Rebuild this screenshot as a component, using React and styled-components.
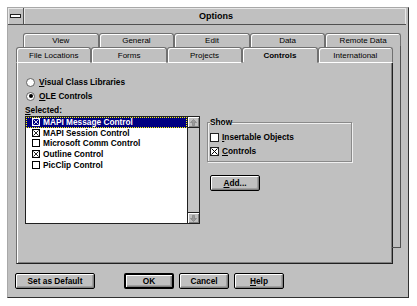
import React, { useState } from "react";
import styled, { createGlobalStyle } from "styled-components";

const GlobalStyle = createGlobalStyle`
  html, body {
    margin: 0;
    padding: 0;
    background: #fff;
  }
  body {
    font-family: "Liberation Sans", Arial, sans-serif;
    color: #000;
  }
  * { box-sizing: border-box; }
`;

const backTabs = ["View", "General", "Edit", "Data", "Remote Data"];
const frontTabs = ["File Locations", "Forms", "Projects", "Controls", "International"];

const initialControls = [
  { name: "MAPI Message Control", on: true },
  { name: "MAPI Session Control", on: true },
  { name: "Microsoft Comm Control", on: false },
  { name: "Outline Control", on: true },
  { name: "PicClip Control", on: false }
];

function Cross() {
  return (
    <svg width="7" height="7" viewBox="0 0 7 7">
      <path d="M0.5 0.5L6.5 6.5M6.5 0.5L0.5 6.5" stroke="currentColor" strokeWidth="1" />
    </svg>
  );
}

function Arrow({ down }) {
  return (
    <svg width="7" height="7" viewBox="0 0 7 7" style={down ? { transform: "rotate(180deg)" } : null}>
      <path d="M3.5 0.5L6.5 3.5H4.5V6.5H2.5V3.5H0.5Z" fill="#9a9a9a" stroke="#7a7a7a" strokeWidth="0.6" />
    </svg>
  );
}

function App() {
  const [mode, setMode] = useState("ole");
  const [controls, setControls] = useState(initialControls);
  const [selected, setSelected] = useState(0);
  const [show, setShow] = useState({ insertable: false, controls: true });

  const toggleControl = i => {
    setSelected(i);
    setControls(controls.map((c, j) => (j === i ? { ...c, on: !c.on } : c)));
  };

  return (
    <>
      <GlobalStyle />
      <Window>
        <TitleBar>
          <SysMenu>
            <SysBar />
          </SysMenu>
          <Title>Options</Title>
        </TitleBar>
        <Body>
          <BackRow>
            {backTabs.map(t => (
              <BackTab key={t}>{t}</BackTab>
            ))}
          </BackRow>
          <FrontRow>
            {frontTabs.map(t => (
              <FrontTab key={t} active={t === "Controls"}>
                {t}
              </FrontTab>
            ))}
          </FrontRow>
          <Panel>
            <RadioRow onClick={() => setMode("vcx")}>
              <Radio checked={mode === "vcx"} />
              <span>
                <u>V</u>isual Class Libraries
              </span>
            </RadioRow>
            <RadioRow onClick={() => setMode("ole")}>
              <Radio checked={mode === "ole"} />
              <span>
                <u>O</u>LE Controls
              </span>
            </RadioRow>
            <FieldLabel>
              <u>S</u>elected:
            </FieldLabel>
            <ContentRow>
              <ListBox>
                <ListItems>
                  {controls.map((c, i) => (
                    <ListItem key={c.name} selected={i === selected} onClick={() => toggleControl(i)}>
                      <SmallBox>{c.on && <Cross />}</SmallBox>
                      {c.name}
                    </ListItem>
                  ))}
                </ListItems>
                <ScrollBar>
                  <ScrollButton>
                    <Arrow />
                  </ScrollButton>
                  <ScrollTrack />
                  <ScrollButton bottom>
                    <Arrow down />
                  </ScrollButton>
                </ScrollBar>
              </ListBox>
              <RightColumn>
                <GroupBox>
                  <GroupLabel>Show</GroupLabel>
                  <CheckRow onClick={() => setShow({ ...show, insertable: !show.insertable })}>
                    <CheckBox>{show.insertable && <Cross />}</CheckBox>
                    <span>
                      <u>I</u>nsertable Objects
                    </span>
                  </CheckRow>
                  <CheckRow onClick={() => setShow({ ...show, controls: !show.controls })}>
                    <CheckBox>{show.controls && <Cross />}</CheckBox>
                    <span>
                      <u>C</u>ontrols
                    </span>
                  </CheckRow>
                </GroupBox>
                <AddButton>
                  <u>A</u>dd...
                </AddButton>
              </RightColumn>
            </ContentRow>
          </Panel>
          <ButtonRow>
            <Button wide>Set as Default</Button>
            <Spacer />
            <Button isDefault>OK</Button>
            <Button>Cancel</Button>
            <Button>
              <u>H</u>elp
            </Button>
          </ButtonRow>
        </Body>
      </Window>
    </>
  );
}

const Window = styled.div`
  margin: 7px 0 0 7px;
  width: 402px;
  height: 291px;
  background: #c0c0c0;
  border-top: 1px solid #a8a8a8;
  border-left: 1px solid #a8a8a8;
  border-right: 1px solid #303030;
  border-bottom: 1px solid #303030;
  display: flex;
  flex-direction: column;
  font-size: 8.3px;
  font-weight: bold;
`;

const TitleBar = styled.div`
  display: flex;
  height: 17px;
  margin-right: 2px;
  border-bottom: 1px solid #505050;
`;

const SysMenu = styled.div`
  width: 16px;
  display: flex;
  align-items: center;
  justify-content: center;
  border-right: 1px solid #505050;
  box-shadow: inset 1px 1px 0 #e8e8e8;
`;

const SysBar = styled.div`
  width: 11px;
  height: 4px;
  background: #fff;
  border: 1px solid #202020;
`;

const Title = styled.div`
  flex: 1;
  text-align: center;
  font-size: 9px;
  line-height: 16px;
  padding-left: 2px;
  box-shadow: inset 1px 1px 0 #e8e8e8, inset -1px 0 0 #e8e8e8;
`;

const Body = styled.div`
  padding: 8px 0 0 8px;
  display: flex;
  flex-direction: column;
`;

const BackRow = styled.div`
  display: grid;
  grid-template-columns: repeat(5, 1fr);
  width: 378px;
  height: 14px;
  margin-left: 7px;
`;

const BackTab = styled.div`
  border: 1px solid #707070;
  border-bottom: none;
  border-radius: 3px 3px 0 0;
  box-shadow: inset 1px 1px 0 #fff;
  font-size: 8px;
  font-weight: normal;
  text-align: center;
  line-height: 14px;
  white-space: nowrap;
  overflow: hidden;
`;

const FrontRow = styled.div`
  display: grid;
  grid-template-columns: repeat(5, 1fr);
  width: 377px;
  height: 16px;
  position: relative;
  z-index: 1;
`;

const FrontTab = styled.div`
  border: 1px solid #707070;
  border-bottom: 1px solid ${p => (p.active ? "#c0c0c0" : "#fff")};
  border-radius: 3px 3px 0 0;
  background: #c0c0c0;
  box-shadow: inset 1px 1px 0 #fff;
  font-size: 8px;
  font-weight: ${p => (p.active ? "bold" : "normal")};
  text-align: center;
  line-height: 16px;
  white-space: nowrap;
  overflow: hidden;
`;

const Panel = styled.div`
  position: relative;
  width: 377px;
  height: 201px;
  padding: 12px 0 0 8px;
  border-left: 1px solid #707070;
  border-right: 1px solid #202020;
  border-bottom: 1px solid #202020;
  box-shadow: inset 1px 0 0 #fff, inset -1px -1px 0 #808080;
  display: flex;
  flex-direction: column;

  &::after {
    content: "";
    position: absolute;
    top: -17px;
    right: -9px;
    width: 8px;
    bottom: 15px;
    border-right: 1px solid #505050;
    border-bottom: 1px solid #505050;
  }
`;

const RadioRow = styled.label`
  display: flex;
  align-items: center;
  height: 14px;
  margin-left: 1px;
  gap: 4px;
  cursor: default;
`;

const Radio = styled.span`
  width: 9px;
  height: 9px;
  border-radius: 50%;
  border: 1px solid #606060;
  background: #fff;
  display: flex;
  align-items: center;
  justify-content: center;

  &::after {
    content: "";
    width: 4px;
    height: 4px;
    border-radius: 50%;
    background: ${p => (p.checked ? "#000" : "transparent")};
  }
`;

const FieldLabel = styled.div`
  margin-top: 1px;
  line-height: 12px;
  height: 12px;
`;

const ContentRow = styled.div`
  display: flex;
  gap: 7px;
`;

const ListBox = styled.div`
  width: 175px;
  height: 108px;
  border: 1px solid #202020;
  background: #fff;
  display: flex;
`;

const ListItems = styled.div`
  flex: 1;
`;

const ListItem = styled.div`
  display: flex;
  align-items: center;
  height: 10.6px;
  padding-left: 6px;
  gap: 3px;
  white-space: nowrap;
  background: ${p => (p.selected ? "#000080" : "transparent")};
  color: ${p => (p.selected ? "#fff" : "#000")};
  outline: ${p => (p.selected ? "1px dotted #ffff00" : "none")};
  outline-offset: -1px;
  cursor: default;
`;

const SmallBox = styled.span`
  width: 8px;
  height: 8px;
  border: 1px solid currentColor;
  display: flex;
  align-items: center;
  justify-content: center;

  svg {
    width: 6px;
    height: 6px;
  }
`;

const ScrollBar = styled.div`
  width: 12px;
  border-left: 1px solid #202020;
  background: #c4c4c4;
  display: flex;
  flex-direction: column;
`;

const ScrollButton = styled.div`
  height: 11px;
  display: flex;
  align-items: center;
  justify-content: center;
  background: #c0c0c0;
  box-shadow: inset 1px 1px 0 #fff, inset -1px -1px 0 #808080;
  border-top: ${p => (p.bottom ? "1px solid #202020" : "none")};
  border-bottom: ${p => (p.bottom ? "none" : "1px solid #202020")};
`;

const ScrollTrack = styled.div`
  flex: 1;
`;

const RightColumn = styled.div`
  display: flex;
  flex-direction: column;
  align-items: flex-start;
  margin-top: 1px;
`;

const GroupBox = styled.fieldset`
  width: 145px;
  margin: 0;
  padding: 3px 2px 3px;
  border: 1px solid #8a8a8a;
  box-shadow: 1px 1px 0 #f0f0f0, inset 1px 1px 0 #f0f0f0;
`;

const GroupLabel = styled.legend`
  padding: 0;
  line-height: 10px;
  font-size: 8.3px;
`;

const CheckRow = styled.label`
  display: flex;
  align-items: center;
  height: 14px;
  gap: 3px;
  cursor: default;
`;

const CheckBox = styled.span`
  width: 9px;
  height: 9px;
  border: 1px solid #202020;
  background: #fff;
  display: flex;
  align-items: center;
  justify-content: center;
`;

const Button = styled.button`
  width: ${p => (p.wide ? "80px" : "50px")};
  height: 16px;
  padding: 0;
  background: #c0c0c0;
  border: ${p => (p.isDefault ? "2px" : "1px")} solid #000;
  border-radius: 2px;
  box-shadow: inset 1px 1px 0 #fff, inset -1px -1px 0 #808080, inset -2px -2px 0 #a0a0a0;
  font-family: "Liberation Sans", Arial, sans-serif;
  font-size: 8.3px;
  font-weight: bold;
  color: #000;
  line-height: 12px;
`;

const AddButton = styled(Button)`
  margin: 13px 0 0 3px;
`;

const ButtonRow = styled.div`
  display: flex;
  gap: 5px;
  margin: 9px 0 0 -1px;
`;

const Spacer = styled.div`
  width: 19px;
`;

export default App;
